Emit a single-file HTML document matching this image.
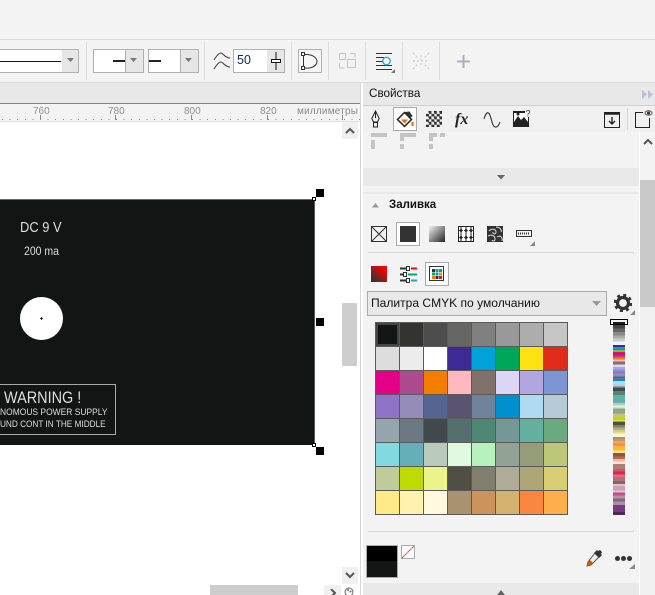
<!DOCTYPE html>
<html><head><meta charset="utf-8">
<style>
html,body{margin:0;padding:0;background:#fff}
#r{position:relative;width:655px;height:595px;overflow:hidden;background:#fff;font-family:"Liberation Sans",sans-serif}
#r div,#r span,#r svg{position:absolute;display:block}
.t{white-space:nowrap;line-height:1;transform-origin:0 0}
#g i{display:block}
</style></head><body><div id="r">
<div style="left:0;top:0;width:655px;height:83px;background:#f3f3f3"></div>
<div style="left:0;top:39px;width:655px;height:1px;background:#d9d9d9"></div>
<div style="left:0;top:82px;width:655px;height:1px;background:#d9d9d9"></div>
<div style="left:0;top:83px;width:360px;height:20px;background:#e8e8e8"></div>
<div style="left:0;top:103px;width:360px;height:1px;background:#2f9fdc"></div>
<div style="left:0;top:104px;width:360px;height:18px;background:#f3f3f3"></div>

<div style="left:86px;top:42px;width:1px;height:38px;background:#dcdcdc"></div>
<div style="left:204px;top:42px;width:1px;height:38px;background:#dcdcdc"></div>
<div style="left:291px;top:42px;width:1px;height:38px;background:#dcdcdc"></div>
<div style="left:328px;top:42px;width:1px;height:38px;background:#dcdcdc"></div>
<div style="left:365px;top:42px;width:1px;height:38px;background:#dcdcdc"></div>
<div style="left:402px;top:42px;width:1px;height:38px;background:#dcdcdc"></div>
<div style="left:439px;top:42px;width:1px;height:38px;background:#dcdcdc"></div>

<div style="left:-2px;top:49px;width:64px;height:22px;background:#fff;border:1px solid #b0b0b0"></div>
<div style="left:0;top:61px;width:61px;height:1px;background:#111"></div>
<div style="left:62px;top:49px;width:16px;height:22px;background:#e6e6e6;border:1px solid #b0b0b0;border-left:0"></div>
<svg style="left:66px;top:58px" width="10" height="6"><path d="M1 0h7l-3.500 4z" fill="#777"/></svg>

<div style="left:93px;top:49px;width:31px;height:22px;background:#fff;border:1px solid #b0b0b0"></div>
<div style="left:113px;top:60px;width:12px;height:2px;background:#222"></div>
<div style="left:125px;top:49px;width:17px;height:22px;background:#e6e6e6;border:1px solid #b0b0b0"></div>
<svg style="left:129px;top:58px" width="10" height="6"><path d="M1 0h7l-3.500 4z" fill="#777"/></svg>
<div style="left:148px;top:49px;width:31px;height:22px;background:#fff;border:1px solid #b0b0b0"></div>
<div style="left:149px;top:60px;width:12px;height:2px;background:#222"></div>
<div style="left:180px;top:49px;width:17px;height:22px;background:#e6e6e6;border:1px solid #b0b0b0"></div>
<svg style="left:184px;top:58px" width="10" height="6"><path d="M1 0h7l-3.500 4z" fill="#777"/></svg>

<svg style="left:213px;top:52px" width="20" height="18" fill="none" stroke="#444" stroke-width="1.100"><path d="M1 8C4 3 6 1 8 1s4 5 9 5"/><path d="M1 17C4 12 6 10 8 10s4 5 9 5"/></svg>
<div style="left:233px;top:49px;width:33px;height:22px;background:#fff;border:1px solid #b0b0b0"></div>
<div class="t" style="left:237px;top:54px;font-size:12.500px;color:#0b2a66">50</div>
<div style="left:267px;top:49px;width:17px;height:22px;background:#e6e6e6;border:1px solid #b0b0b0;border-left:0"></div>
<svg style="left:270px;top:52px" width="12" height="18"><path d="M6 0v18" stroke="#111"/><rect x="1.500" y="7.500" width="9" height="3" fill="#fff" stroke="#111"/></svg>
<div style="left:298px;top:49px;width:22px;height:22px;background:#f5f5f5;border:1px solid #b0b0b0"></div>
<svg style="left:300px;top:51px" width="20" height="20" fill="none" stroke="#333"><path d="M5 3.500C14 3 17 8 17 10.500S14 18 5 17"/><path d="M3.500 5v10"/><rect x="1.500" y="1.500" width="3" height="3" fill="#fff"/><rect x="1.500" y="15.500" width="3" height="3" fill="#fff"/></svg>
<svg style="left:338px;top:52px" width="20" height="18" fill="none" stroke="#c6c6c6"><rect x="1.500" y="1.500" width="6" height="6"/><rect x="9.500" y="7.500" width="8" height="8"/><path d="M12 1.500h5v4M1.500 11v5h5"/></svg>
<svg style="left:375px;top:52px" width="22" height="22" fill="none"><path d="M1 1.500h16M1 5.500h8M1 9.500h8M1 13.500h16M1 17.500h16" stroke="#333" stroke-width="1.100"/><circle cx="11.500" cy="9" r="3.700" stroke="#29a8e8" stroke-width="1.400" fill="#fff"/><path d="M20 17v4h-4z" fill="#777"/></svg>
<svg style="left:412px;top:52px" width="18" height="18" fill="none" stroke="#c8c8c8" stroke-dasharray="2 2"><path d="M1 1l5 5M17 1l-5 5M1 17l5-5M17 17l-5-5M1 9h16M9 3v12"/></svg>
<svg style="left:457px;top:55px" width="13" height="13"><path d="M6.500 0v13M0 6.500h13" stroke="#a9b2ba" stroke-width="2"/></svg>

<div class="t" style="left:33px;top:107px;font-size:10px;color:#929292">760</div>
<div class="t" style="left:108px;top:107px;font-size:10px;color:#929292">780</div>
<div class="t" style="left:184px;top:107px;font-size:10px;color:#929292">800</div>
<div class="t" style="left:260px;top:107px;font-size:10px;color:#929292">820</div>
<div class="t" style="left:297px;top:107px;font-size:10px;color:#8a8a8a;letter-spacing:.2px">миллиметры</div>
<div style="left:0;top:119px;width:360px;height:1px;background:repeating-linear-gradient(90deg,#888 0 1px,transparent 1px 7.600px);background-position:2px 0"></div>
<div style="left:40px;top:115px;width:1px;height:5px;background:#888"></div>
<div style="left:115px;top:115px;width:1px;height:5px;background:#888"></div>
<div style="left:191px;top:115px;width:1px;height:5px;background:#888"></div>
<div style="left:267px;top:115px;width:1px;height:5px;background:#888"></div>
<div style="left:342px;top:115px;width:1px;height:5px;background:#888"></div>
<div style="left:0;top:121px;width:360px;height:1px;background:#e2e2e2"></div>

<div style="left:0;top:199px;width:315px;height:246px;background:#131514;box-shadow:inset 0 1px 0 #666,inset -1px 0 0 #555"></div>
<div class="t" style="left:20px;top:220px;font-size:15px;color:#ddd;transform:scaleX(.86)">DC 9 V</div>
<div class="t" style="left:24px;top:245px;font-size:12px;color:#ddd;transform:scaleX(.875)">200 ma</div>
<div style="left:20px;top:297px;width:43px;height:43px;border-radius:50%;background:#fff"></div>
<div style="left:41px;top:317px;width:1px;height:3px;background:#333"></div>
<div style="left:40px;top:318px;width:3px;height:1px;background:#333"></div>
<div style="left:-3px;top:384px;width:117px;height:49px;border:1px solid #aaa"></div>
<div class="t" style="left:4px;top:390px;font-size:16.500px;color:#ddd;transform:scaleX(.875)">WARNING !</div>
<div class="t" style="left:0;top:408px;font-size:9px;color:#ddd;transform:scaleX(.94)">NOMOUS POWER SUPPLY</div>
<div class="t" style="left:0;top:420px;font-size:9px;color:#ddd;transform:scaleX(.913)">UND CONT IN THE MIDDLE</div>

<div style="left:316px;top:189px;width:8px;height:8px;background:#000"></div>
<div style="left:316px;top:318px;width:8px;height:8px;background:#000"></div>
<div style="left:316px;top:447px;width:8px;height:8px;background:#000"></div>
<div style="left:312px;top:197px;width:2px;height:2px;background:#fff;border:1px solid #000"></div>
<div style="left:312px;top:443px;width:2px;height:2px;background:#fff;border:1px solid #000"></div>

<div style="left:342px;top:303px;width:15px;height:63px;background:#cdcdcd"></div>
<div style="left:342px;top:122px;width:16px;height:17px;background:#f0f0f0"></div>
<svg style="left:345px;top:127px" width="10" height="7" fill="none" stroke="#555" stroke-width="2"><path d="M1 6l4-4 4 4"/></svg>
<div style="left:342px;top:567px;width:16px;height:17px;background:#f0f0f0"></div>
<svg style="left:345px;top:572px" width="10" height="7" fill="none" stroke="#555" stroke-width="2"><path d="M1 1l4 4 4-4"/></svg>
<div style="left:210px;top:585px;width:88px;height:10px;background:#cdcdcd"></div>
<div style="left:324px;top:585px;width:17px;height:10px;background:#f0f0f0"></div>
<svg style="left:330px;top:589px" width="7" height="6" fill="none" stroke="#555" stroke-width="2"><path d="M1 0l4 4-4 4"/></svg>
<svg style="left:344px;top:587px" width="10" height="8" fill="none" stroke="#666"><circle cx="5" cy="5" r="4"/><circle cx="4" cy="3" r=".5"/><circle cx="6.500" cy="4.500" r=".5"/></svg>

<div style="left:360px;top:83px;width:1px;height:512px;background:#d6d6d6"></div>
<div style="left:363px;top:83px;width:292px;height:22px;background:#e8e8e8"></div>
<div class="t" style="left:369px;top:88px;font-size:11.700px;color:#111">Свойства</div>
<svg style="left:642px;top:90px" width="11" height="9"><path d="M0 0l5 4.500-5 4.500zM6 0l5 4.500-5 4.500z" fill="#b9c2cc"/></svg>
<div style="left:363px;top:105px;width:292px;height:1px;background:#cfcfcf"></div>
<div style="left:363px;top:106px;width:292px;height:26px;background:#f0f0f0"></div>
<div style="left:363px;top:132px;width:276px;height:463px;background:#f3f3f3"></div>
<div style="left:640px;top:132px;width:15px;height:463px;background:#f0f0f0"></div>
<div style="left:640px;top:132px;width:15px;height:48px;background:#f3f3f3"></div>
<div style="left:640px;top:180px;width:15px;height:127px;background:#c9c9c9"></div>
<svg style="left:643px;top:138px" width="10" height="7" fill="none" stroke="#555" stroke-width="2"><path d="M1 6l4-4 4 4"/></svg>

<svg style="left:371px;top:110px" width="9" height="18" fill="none" stroke="#222"><path d="M4.500 1L.8 8.500 2.500 12h4l1.700-3.500zM4.500 1v7"/><rect x="2.500" y="12.500" width="4" height="4.500"/></svg>
<div style="left:393px;top:107px;width:22px;height:22px;background:#fff;border:1px solid #aaa"></div>
<svg style="left:395px;top:109px" width="20" height="20"><path d="M9.500 3.500l7 7-7 7-7-7z" fill="none" stroke="#222" stroke-width="1.500"/><path d="M6 10.500h7l-3.500 4z" fill="#f60"/><path d="M9.500 3l5-.5 3 4.500-2 2z" fill="#333"/><rect x="16.500" y="13" width="2" height="4" fill="#f60"/></svg>
<div style="left:426px;top:111px;width:16px;height:16px;background:repeating-conic-gradient(#333 0 25%,#eee 0 50%) 0 0/5.400px 5.400px"></div>
<div class="t" style="left:455px;top:111px;font:italic bold 16px 'Liberation Serif',serif;color:#222">fx</div>
<svg style="left:483px;top:109px" width="18" height="20" fill="none" stroke="#333" stroke-width="1.100"><path d="M1 10C2.500 5 4 3 5.500 4S8 9 9 13s2.500 5.500 4.500 5S16 15 17 13"/></svg>
<svg style="left:513px;top:109px" width="18" height="19"><rect x="0" y="2" width="16" height="16" fill="#222"/><path d="M1 13l4-6 3 4 3-3 4 5v-9H1z" fill="#fff"/><circle cx="5" cy="5" r="1.500" fill="#222"/><rect x="12" y="0" width="6" height="8" fill="#f0f0f0"/><text x="12.500" y="7.500" font-size="9" fill="#444" font-family="Liberation Sans">?</text></svg>
<svg style="left:604px;top:111px" width="17" height="17" fill="none" stroke="#222"><rect x=".5" y="1.500" width="15" height="15"/><path d="M1 2.500h14" stroke-width="2.500"/><path d="M8 6v7M5 10l3 3 3-3" stroke-width="1.400"/></svg>
<div style="left:627px;top:108px;width:1px;height:22px;background:#d8d8d8"></div>
<svg style="left:635px;top:110px" width="18" height="18" fill="none" stroke="#222"><path d="M8 2.500H.5v15h14V8"/><ellipse cx="13.500" cy="3" rx="3.500" ry="2.200" stroke="#555"/><circle cx="13.500" cy="3" r="1" fill="#555"/></svg>

<div style="left:371px;top:133px;width:16px;height:4px;background:#c4c4c4"></div>
<div style="left:371px;top:140px;width:4px;height:9px;background:#c4c4c4"></div>
<div style="left:400px;top:133px;width:16px;height:4px;background:#c4c4c4"></div>
<div style="left:400px;top:133px;width:4px;height:8px;background:#c4c4c4"></div>
<div style="left:400px;top:144px;width:4px;height:5px;background:#c4c4c4"></div>
<div style="left:429px;top:133px;width:8px;height:4px;background:#c4c4c4"></div>
<div style="left:440px;top:133px;width:5px;height:4px;background:#c4c4c4"></div>
<div style="left:429px;top:133px;width:4px;height:8px;background:#c4c4c4"></div>
<div style="left:429px;top:144px;width:4px;height:5px;background:#c4c4c4"></div>

<div style="left:363px;top:168px;width:276px;height:18px;background:#e9e9e9"></div>
<svg style="left:497px;top:175px" width="9" height="5"><path d="M0 0h8l-4 4.500z" fill="#666"/></svg>
<div style="left:363px;top:192px;width:276px;height:2px;background:#e9e9e9"></div>

<svg style="left:372px;top:203px" width="8" height="5"><path d="M0 4.500h7L3.500 0z" fill="#999"/></svg>
<div class="t" style="left:389px;top:200px;font-size:11.500px;font-weight:bold;color:#111">Заливка</div>

<svg style="left:371px;top:226px" width="16" height="16" fill="none" stroke="#333"><rect x=".5" y=".5" width="15" height="15"/><path d="M.5.500l15 15M15.500.500l-15 15"/></svg>
<div style="left:396px;top:222px;width:22px;height:22px;background:#fff;border:1px solid #aaa"></div>
<div style="left:400px;top:226px;width:16px;height:16px;background:#333"></div>
<div style="left:429px;top:226px;width:16px;height:16px;background:linear-gradient(135deg,#f3f3f3,#222)"></div>
<svg style="left:458px;top:226px" width="16" height="16"><rect x=".5" y=".5" width="15" height="15" fill="#fff" stroke="#222"/><path d="M3 1v14M8 1v14M13 1v14" stroke="#222"/><path d="M3 2.500l2 2-2 2-2-2zM8 2.500l2 2-2 2-2-2zM13 2.500l2 2-2 2-2-2zM3 9.500l2 2-2 2-2-2zM8 9.500l2 2-2 2-2-2zM13 9.500l2 2-2 2-2-2z" fill="#222"/></svg>
<svg style="left:487px;top:226px" width="16" height="16" fill="none"><rect width="16" height="16" fill="#333"/><path d="M2 5c3-3 7-2 7 1s-4 2-3 0M9 1c4 0 6 3 5 5M1 10c4-2 7 0 7 3s-3 2-3 1M10 11c3-2 6 0 5 4" stroke="#ddd"/></svg>
<svg style="left:516px;top:230px" width="17" height="8" fill="none"><rect x=".5" y=".5" width="15" height="6" stroke="#333"/><path d="M2 3.500h11" stroke="#333" stroke-width="2" stroke-dasharray="1 1"/></svg>
<svg style="left:530px;top:241px" width="5" height="5"><path d="M5 0v5H0z" fill="#888"/></svg>
<div style="left:368px;top:252px;width:266px;height:1px;background:#d6d6d6"></div>

<div style="left:371px;top:266px;width:16px;height:16px;background:linear-gradient(45deg,#333 10%,#f00 85%)"></div>
<svg style="left:400px;top:266px" width="17" height="17"><path d="M0 2.500h6M0 8.500h3M0 14.500h6" stroke="#333" stroke-width="2"/><rect x="6.500" y=".5" width="3" height="4" fill="#fff" stroke="#333"/><rect x="3.500" y="6.500" width="3" height="4" fill="#fff" stroke="#333"/><rect x="6.500" y="12.500" width="3" height="4" fill="#fff" stroke="#333"/><path d="M11 2.500h6" stroke="#f00" stroke-width="2"/><path d="M8 8.500h9" stroke="#0a6" stroke-width="2"/><path d="M11 14.500h6" stroke="#1ab" stroke-width="2"/></svg>
<div style="left:425px;top:262px;width:22px;height:22px;background:#fff;border:1px solid #aaa"></div>
<svg style="left:429px;top:266px" width="16" height="16"><rect x=".5" y=".5" width="14" height="14" fill="#fff" stroke="#333"/><rect x="3" y="3" width="3" height="3" fill="#333"/><rect x="6.500" y="3" width="3" height="3" fill="#09c"/><rect x="10" y="3" width="3" height="3" fill="#0a6"/><rect x="3" y="6.500" width="3" height="3" fill="#0a6"/><rect x="6.500" y="6.500" width="3" height="3" fill="#09c"/><rect x="10" y="6.500" width="3" height="3" fill="#f80"/><rect x="3" y="10" width="3" height="3" fill="#f70"/><rect x="6.500" y="10" width="3" height="3" fill="#333"/><rect x="10" y="10" width="3" height="3" fill="#e11"/></svg>

<div style="left:367px;top:291px;width:238px;height:23px;background:#e8e8e8;border:1px solid #aaa"></div>
<div class="t" style="left:371px;top:297px;font-size:12.050px;color:#111">Палитра CMYK по умолчанию</div>
<svg style="left:592px;top:301px" width="10" height="5"><path d="M0 0h9L4.500 5z" fill="#999"/></svg>
<svg style="left:614px;top:294px" width="18" height="18"><circle cx="9" cy="9" r="5.500" fill="none" stroke="#333" stroke-width="3.200"/><circle cx="9" cy="9" r="8" fill="none" stroke="#333" stroke-width="2.500" stroke-dasharray="3 3.280"/></svg>
<svg style="left:630px;top:310px" width="5" height="5"><path d="M5 0v5H0z" fill="#888"/></svg>

<div style="left:375px;top:322px;width:193px;height:193px;background:#5a5a5a"></div>
<div id="g" style="left:376px;top:323px;width:192px;height:192px;display:grid;grid-template-columns:repeat(8,23px);grid-auto-rows:23px;gap:1px">
<i style="background:#141615;border:2px solid #444;box-sizing:border-box"></i><i style="background:#333331"></i><i style="background:#4d4d4d"></i><i style="background:#666664"></i><i style="background:#808080"></i><i style="background:#999"></i><i style="background:#adadae"></i><i style="background:#c5c6c5"></i>
<i style="background:#dcdddc"></i><i style="background:#ececec"></i><i style="background:#fff"></i><i style="background:#3f2a95"></i><i style="background:#00a3d9"></i><i style="background:#00a65a"></i><i style="background:#fde110"></i><i style="background:#e02b1b"></i>
<i style="background:#e5008a"></i><i style="background:#ab4a8d"></i><i style="background:#f47d00"></i><i style="background:#ffb8bf"></i><i style="background:#80716a"></i><i style="background:#dbd6f5"></i><i style="background:#b2a6e1"></i><i style="background:#7e95d4"></i>
<i style="background:#8e73c6"></i><i style="background:#958cb9"></i><i style="background:#546591"></i><i style="background:#5a5470"></i><i style="background:#71829c"></i><i style="background:#0090d0"></i><i style="background:#aedaf2"></i><i style="background:#b7cad8"></i>
<i style="background:#94a5ab"></i><i style="background:#6b7a82"></i><i style="background:#42494c"></i><i style="background:#556f6f"></i><i style="background:#4e8776"></i><i style="background:#749896"></i><i style="background:#63b0a0"></i><i style="background:#6aaa7c"></i>
<i style="background:#82d9e0"></i><i style="background:#64afb8"></i><i style="background:#b9c9bb"></i><i style="background:#e0fae0"></i><i style="background:#b7f1bc"></i><i style="background:#93a295"></i><i style="background:#949c79"></i><i style="background:#bec679"></i>
<i style="background:#bfcb9b"></i><i style="background:#bddb00"></i><i style="background:#ebf38b"></i><i style="background:#514e45"></i><i style="background:#807e6c"></i><i style="background:#aeac96"></i><i style="background:#aca679"></i><i style="background:#dace73"></i>
<i style="background:#ffea8a"></i><i style="background:#fff1b0"></i><i style="background:#fffadf"></i><i style="background:#a89270"></i><i style="background:#cc945c"></i><i style="background:#d4b26d"></i><i style="background:#fb863f"></i><i style="background:#ffaf4a"></i>
</div>

<div style="left:613px;top:322px;width:12px;height:579px;transform-origin:0 0;transform:scaleY(.3333);background:linear-gradient(180deg,#1c1c1c 0 9px,#444 9px 20px,#666 20px 30px,#8a8a8a 30px 40px,#aaa 40px 50px,#ccc 50px 59px,#f5f5f5 59px 69px,#3f2a95 69px 75px,#00a3d9 75px 81px,#00a65a 81px 85px,#fde110 85px 89px,#e02b1b 89px 92px,#e5008a 92px 101px,#ab4a8d 101px 107px,#f47d00 107px 113px,#ffb8bf 113px 119px,#80716a 119px 127px,#dbd6f5 127px 135px,#b2a6e1 135px 143px,#7e95d4 143px 149px,#8e73c6 149px 155px,#958cb9 155px 163px,#546591 163px 169px,#71829c 169px 171px,#0090d0 171px 177px,#aedaf2 177px 187px,#b7cad8 187px 192px,#94a5ab 192px 197px,#42494c 197px 207px,#4e8776 207px 219px,#63b0a0 219px 237px,#64afb8 237px 243px,#b9c9bb 243px 251px,#e0fae0 251px 255px,#b7f1bc 255px 259px,#93a295 259px 275px,#bec679 275px 287px,#bddb00 287px 295px,#ebf38b 295px 299px,#514e45 299px 309px,#807e6c 309px 316px,#aeac96 316px 324px,#dace73 324px 331px,#ffea8a 331px 336px,#fffadf 336px 345px,#a89270 345px 351px,#cc945c 351px 357px,#d4b26d 357px 364px,#fb863f 364px 371px,#ffaf4a 371px 379px,#ffc400 379px 385px,#ffd9a0 385px 393px,#7f5a4a 393px 404px,#bc6a46 404px 411px,#ffb09a 411px 419px,#fde8de 419px 426px,#b07c78 426px 441px,#c25c6c 441px 449px,#e8204f 449px 457px,#e86a80 457px 465px,#a87480 465px 477px,#806470 477px 486px,#f0b8c8 486px 492px,#c8a0b0 492px 505px,#d8c8d0 505px 511px,#c84a8c 511px 521px,#b890a8 521px 530px,#806878 530px 538px,#a890a0 538px 549px,#7a3a80 549px 570px,#4a2a50 570px 579px)"></div>
<div style="left:610px;top:319px;width:16px;height:4px;border:1px solid #000;background:transparent"></div>

<div style="left:368px;top:531px;width:266px;height:1px;background:#d6d6d6"></div>
<div style="left:366px;top:545px;width:30px;height:31px;border:1px solid #aaa;background:linear-gradient(180deg,#000 0 15px,#131514 15px)"></div>
<div style="left:401px;top:545px;width:12px;height:12px;border:1px solid #aaa;background:#fff"></div>
<svg style="left:402px;top:546px" width="12" height="12"><path d="M0 12L12 0" stroke="#d22" stroke-dasharray="1.500 .5"/></svg>
<svg style="left:585px;top:549px" width="18" height="18"><path d="M10 4l4 4-8 8-4 1 1-4z" fill="#eee" stroke="#555"/><path d="M2 17l1-4 3 3z" fill="#c50"/><path d="M3 13l2-2 3 3-2 2z" fill="#c50"/><path d="M9 4l3-3 1 1 2-1 2 2-1 2 1 1-3 3z" fill="#333"/></svg>
<div style="left:615px;top:556px;width:5px;height:5px;border-radius:50%;background:#333"></div>
<div style="left:621px;top:556px;width:5px;height:5px;border-radius:50%;background:#333"></div>
<div style="left:627px;top:556px;width:5px;height:5px;border-radius:50%;background:#333"></div>
<svg style="left:629px;top:564px" width="6" height="5"><path d="M6 0v5H0z" fill="#888"/></svg>
<div style="left:363px;top:583px;width:276px;height:12px;background:#e9e9e9"></div>
<svg style="left:497px;top:590px" width="9" height="5"><path d="M0 5h8L4 0z" fill="#666"/></svg>
</div>
</body></html>
